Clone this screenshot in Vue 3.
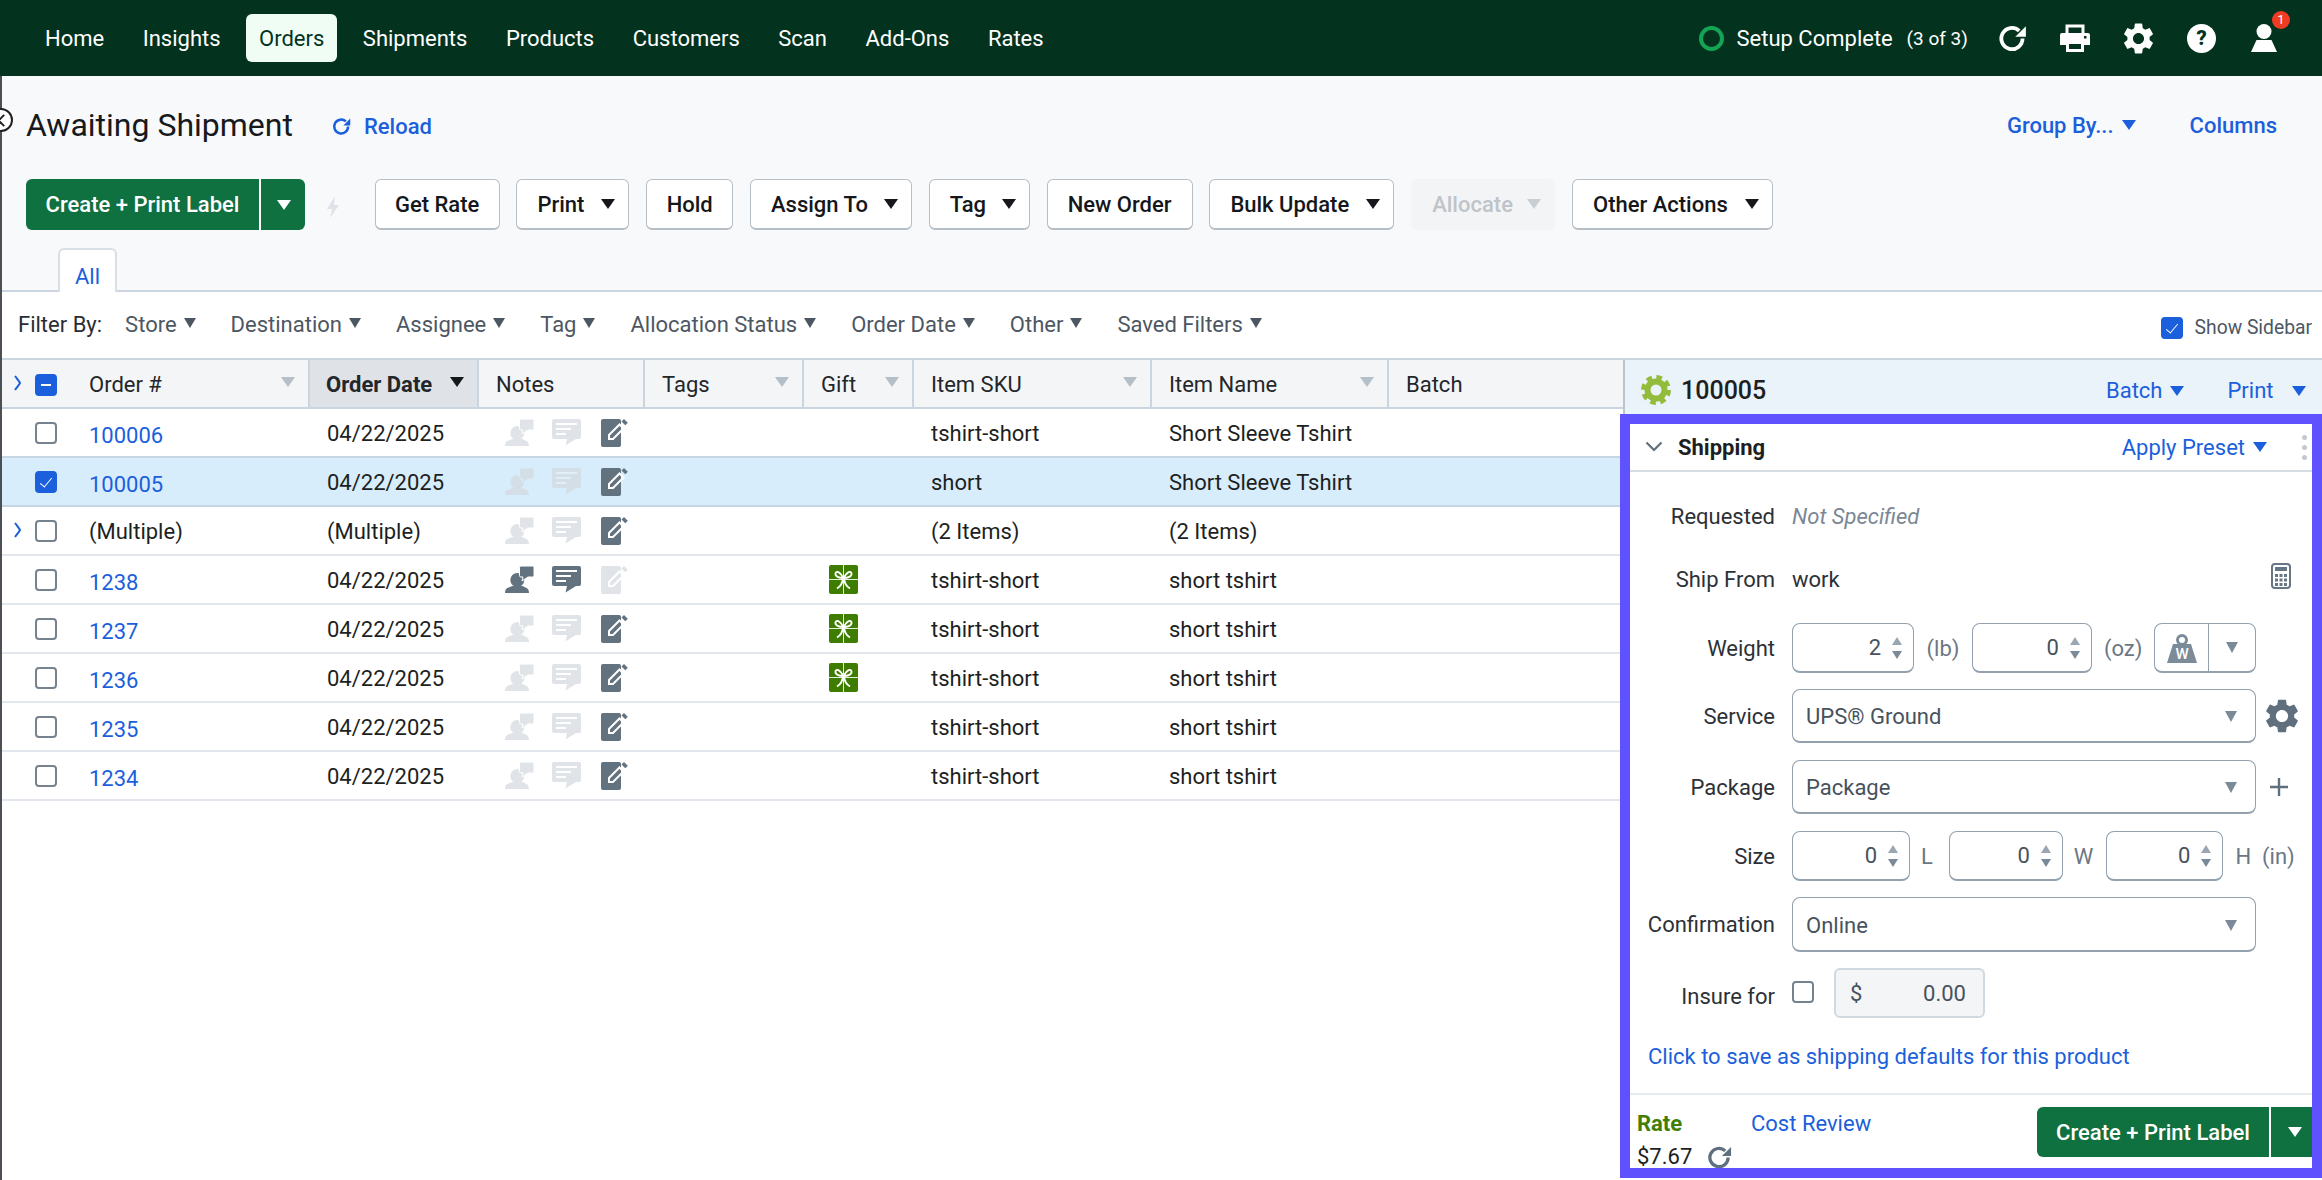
<template>
  <div class="page">
    <header class="nav">
      <div class="nav-links">
        <a v-for="item in navItems" :key="item" class="nav-link" :class="{ active: item === 'Orders' }">{{ item }}</a>
      </div>
      <div class="nav-right">
        <span class="setup-ring"></span>
        <span class="setup-text">Setup Complete</span>
        <span class="setup-count">(3 of 3)</span>
        <svg class="nav-icon refresh-nav" viewBox="0 0 26 26">
          <path d="M22 13a9.5 9.5 0 1 1-3-6.9" fill="none" stroke="#fff" stroke-width="3.4" />
          <path d="M25 2v9.5h-9.5z" fill="#fff" />
        </svg>
        <svg class="nav-icon printer" viewBox="0 0 30 28">
          <path d="M7 9V2h16v7" fill="none" stroke="#fff" stroke-width="3" />
          <path d="M2 9h26a2 2 0 0 1 2 2v10h-6v-4H6v4H0V11a2 2 0 0 1 2-2z" fill="#fff" />
          <path d="M7.5 18.5h15v8h-15z" fill="none" stroke="#fff" stroke-width="3" />
          <rect x="24" y="12" width="2.5" height="2.5" fill="#03331f" />
        </svg>
        <svg class="nav-icon gear" viewBox="2 2 20 20">
          <path fill="#fff" :d="gearPath" />
        </svg>
        <span class="help">?</span>
        <span class="user">
          <svg viewBox="0 0 26 28" class="user-svg">
            <circle cx="13" cy="7.5" r="7.5" fill="#fff" />
            <path d="M5.5 16h15L26 28H0z" fill="#fff" />
          </svg>
          <span class="badge">1</span>
        </span>
      </div>
    </header>

    <div class="content">
      <span class="edge-circle"></span>
      <div class="title-row">
        <h1 class="title">Awaiting Shipment</h1>
        <a class="reload">
          <svg class="reload-icon" viewBox="0 0 26 26">
            <path d="M22 13a9.5 9.5 0 1 1-3-6.9" fill="none" stroke="#1b5fdc" stroke-width="3.4" />
            <path d="M25 2v9.5h-9.5z" fill="#1b5fdc" />
          </svg>
          Reload
        </a>
        <div class="title-links">
          <a class="strong-link">Group By...<i class="caret blue"></i></a>
          <a class="strong-link columns">Columns</a>
        </div>
      </div>

      <div class="actions">
        <div class="split-btn">
          <span class="split-main">Create + Print Label</span>
          <span class="split-arrow"><i class="caret white"></i></span>
        </div>
        <svg class="bolt" viewBox="0 0 14 22"><path d="M9 0 1 13h5l-2 9 9-13H8z" fill="#dfe3e7" /></svg>
        <button v-for="b in actions" :key="b.label" class="btn" :class="{ disabled: b.disabled, plain: !b.caret }" :style="{ width: b.w + 'px' }">
          {{ b.label }}<i v-if="b.caret" class="caret" :class="{ pale: b.disabled }"></i>
        </button>
      </div>

      <div class="tabs"><span class="tab">All</span></div>

      <div class="filters">
        <span class="filter-label">Filter By:</span>
        <span v-for="f in filters" :key="f" class="filter">{{ f }}<i class="caret slate"></i></span>
        <label class="show-sidebar"><span class="check on"></span>Show Sidebar</label>
      </div>

      <div class="main">
        <div class="table">
          <div class="thead grid">
            <div class="th first">
              <svg class="chev" viewBox="0 0 9 18"><path d="M2 2c3 4 4 5 5 7-1 2-2 3-5 7" fill="none" stroke="#1b5fdc" stroke-width="2" /></svg>
              <span class="check on minus"></span>
              <span class="order-head">Order #</span>
              <i class="caret pale-head"></i>
            </div>
            <div class="th sorted">Order Date<i class="caret dark-head"></i></div>
            <div class="th">Notes</div>
            <div class="th">Tags<i class="caret pale-head"></i></div>
            <div class="th">Gift<i class="caret pale-head"></i></div>
            <div class="th">Item SKU<i class="caret pale-head"></i></div>
            <div class="th">Item Name<i class="caret pale-head"></i></div>
            <div class="th last">Batch</div>
          </div>
          <div v-for="row in rows" :key="row.id" class="tr grid" :class="{ selected: row.selected }">
            <div class="td first">
              <svg v-if="row.multi" class="chev" viewBox="0 0 9 18"><path d="M2 2c3 4 4 5 5 7-1 2-2 3-5 7" fill="none" stroke="#1b5fdc" stroke-width="2" /></svg>
              <span v-else class="chev"></span>
              <span class="check" :class="{ on: row.selected }"></span>
              <span v-if="row.multi" class="order-multi">{{ row.id }}</span>
              <a v-else class="order-link">{{ row.id }}</a>
            </div>
            <div class="td">{{ row.date }}</div>
            <div class="td notes">
              <svg class="note-person" :class="row.notes ? 'on' : 'off'" viewBox="0 0 29 27">
                <circle cx="12.300" cy="14" r="7" />
                <path d="M0 27c0-3 1-4.500 3.500-5.500l4-1.500h10l3 1.500c2.500 1 3.500 2.500 3.500 5.500z" />
                <path class="bubble" d="M14.500 1.500a1.500 1.500 0 0 1 1.500-1.500h11.500a1.500 1.500 0 0 1 1.500 1.500v8a1.500 1.500 0 0 1-1.500 1.500h-4.500l-6 4 1-4h-2a1.500 1.500 0 0 1-1.500-1.500z" />
              </svg>
              <svg class="note-msg" :class="row.notes ? 'on' : 'off'" viewBox="0 0 29 27">
                <path d="M2 0h25a2 2 0 0 1 2 2v16a2 2 0 0 1-2 2h-3L13.500 26.500l1.500-6.500H2a2 2 0 0 1-2-2V2a2 2 0 0 1 2-2z" />
                <path class="note-lines" d="M4 5h21M4 10h15M4 15h10" stroke-width="1.800" fill="none" />
              </svg>
              <svg class="note-edit" :class="row.notes ? 'off' : 'on'" viewBox="0 0 27 29">
                <rect x="0" y="1" width="20" height="28" rx="2" />
                <path d="M8 17 18.500 6.500l4 4L12 21H8z" fill="none" stroke="#fff" stroke-width="2" />
                <path d="M20.500 3.500 23 1l3.800 3.800-2.500 2.500z" />
              </svg>
            </div>
            <div class="td"></div>
            <div class="td gift-cell">
              <svg v-if="row.gift" class="gift" viewBox="0 0 29 29">
                <rect width="29" height="29" rx="2" fill="#3f7d00" />
                <path d="M14.500 0v29M0 14.500h29" stroke="#e6eedc" stroke-width="1" />
                <path d="M14.500 13C11 6.500 7 5.500 6.500 8.500S10 13 14.500 13c4.500 0 8.500-1.500 8-4.500S18 6.500 14.500 13z" fill="#3f7d00" stroke="#fff" stroke-width="1.900" />
                <path d="M14 13.500c-.5 5-2.500 8-6 10M15 13.500c.5 5 2.500 8 6 10" fill="none" stroke="#fff" stroke-width="2" />
              </svg>
            </div>
            <div class="td">{{ row.sku }}</div>
            <div class="td">{{ row.name }}</div>
            <div class="td"></div>
          </div>
        </div>

        <aside class="sidebar">
          <div class="side-head">
            <svg class="side-gear" viewBox="0 0 32 32">
              <circle cx="16" cy="16" r="12.500" fill="none" stroke="#93bc3c" stroke-width="5" stroke-dasharray="5.500 4.320" />
              <circle cx="16" cy="16" r="8.500" fill="none" stroke="#93bc3c" stroke-width="6" />
            </svg>
            <span class="side-order">100005</span>
            <a class="side-link batch">Batch<i class="caret blue"></i></a>
            <a class="side-link print">Print<i class="caret blue"></i></a>
          </div>

          <div class="panel">
            <div class="panel-head">
              <svg class="panel-chev" viewBox="0 0 18 11"><path d="M1.500 1.500 9 9l7.500-7.500" fill="none" stroke="#5f6f7e" stroke-width="2.200" /></svg>
              <strong class="panel-title">Shipping</strong>
              <a class="side-link preset">Apply Preset<i class="caret blue"></i></a>
              <span class="kebab"><i></i><i></i><i></i></span>
            </div>

            <div class="form">
              <div class="row info first-info">
                <label>Requested</label>
                <em class="muted">Not Specified</em>
              </div>
              <div class="row info ship-from">
                <label>Ship From</label>
                <span class="value">work</span>
                <svg class="calc" viewBox="0 0 20 26">
                  <rect x="1" y="1" width="18" height="24" rx="3" fill="#fff" stroke="#677684" stroke-width="2" />
                  <rect x="4" y="4" width="12" height="4" fill="#677684" />
                  <path d="M4 11h3v3H4zM8.500 11h3v3h-3zM13 11h3v3h-3zM4 15.500h3v3H4zM8.500 15.500h3v3h-3zM13 15.500h3v3h-3zM4 20h3v3H4zM8.500 20h3v3h-3zM13 20h3v3h-3z" fill="#677684" />
                </svg>
              </div>
              <div class="row weight">
                <label>Weight</label>
                <span class="num w122">2<span class="spin"><i></i><i></i></span></span>
                <span class="unit lb">(lb)</span>
                <span class="num w120">0<span class="spin"><i></i><i></i></span></span>
                <span class="unit oz">(oz)</span>
                <span class="scale-btn">
                  <span class="scale-left">
                    <svg viewBox="0 0 32 30" class="scale-icon">
                      <circle cx="16" cy="7" r="4.500" fill="none" stroke="#7b8b9a" stroke-width="3" />
                      <path d="M7 11h18l6 19H1z" fill="#7b8b9a" />
                      <text x="16" y="26" text-anchor="middle" class="scale-w">W</text>
                    </svg>
                  </span>
                  <span class="scale-right"><i class="select-caret"></i></span>
                </span>
              </div>
              <div class="row select-row">
                <label>Service</label>
                <span class="select">UPS® Ground<i class="select-caret"></i></span>
                <svg class="side-gear-gray" viewBox="2 2 20 20"><path fill="#5f6f7e" :d="gearPath" /></svg>
              </div>
              <div class="row select-row package">
                <label>Package</label>
                <span class="select">Package<i class="select-caret"></i></span>
                <svg class="plus" viewBox="0 0 18 18"><path d="M9 0v18M0 9h18" stroke="#5f6f7e" stroke-width="2.400" /></svg>
              </div>
              <div class="row size">
                <label>Size</label>
                <span class="num w118">0<span class="spin"><i></i><i></i></span></span>
                <span class="unit l">L</span>
                <span class="num w114">0<span class="spin"><i></i><i></i></span></span>
                <span class="unit w">W</span>
                <span class="num w117">0<span class="spin"><i></i><i></i></span></span>
                <span class="unit h">H</span>
                <span class="unit in">(in)</span>
              </div>
              <div class="row select-row confirm">
                <label>Confirmation</label>
                <span class="select">Online<i class="select-caret"></i></span>
              </div>
              <div class="row insure">
                <label>Insure for</label>
                <span class="check insure-check"></span>
                <span class="money"><span>$</span><span>0.00</span></span>
              </div>
              <a class="defaults">Click to save as shipping defaults for this product</a>
            </div>

            <div class="panel-foot">
              <div class="rate-col">
                <div class="rate-top">
                  <b class="rate">Rate</b>
                  <a class="cost">Cost Review</a>
                </div>
                <div class="rate-price">
                  $7.67
                  <svg class="rate-refresh" viewBox="0 0 26 26">
                    <path d="M22 13a9.500 9.500 0 1 1-3-6.900" fill="none" stroke="#5f6f7e" stroke-width="3.400" />
                    <path d="M25 2v9.500h-9.500z" fill="#5f6f7e" />
                  </svg>
                </div>
              </div>
              <div class="split-btn foot-btn">
                <span class="split-main">Create + Print Label</span>
                <span class="split-arrow"><i class="caret white"></i></span>
              </div>
            </div>
          </div>
        </aside>
      </div>
    </div>
  </div>
</template>

<script setup>
const navItems = ['Home', 'Insights', 'Orders', 'Shipments', 'Products', 'Customers', 'Scan', 'Add-Ons', 'Rates']

const gearPath =
  'M19.14 12.94c.04-.3.06-.61.06-.94 0-.32-.02-.64-.07-.94l2.03-1.58a.49.49 0 0 0 .12-.61l-1.92-3.32a.488.488 0 0 0-.59-.22l-2.39.96c-.5-.38-1.03-.7-1.62-.94l-.36-2.54a.484.484 0 0 0-.48-.41h-3.84c-.24 0-.43.17-.47.41l-.36 2.54c-.59.24-1.13.57-1.62.94l-2.39-.96c-.22-.08-.47 0-.59.22L2.74 8.87c-.12.21-.08.47.12.61l2.03 1.58c-.05.3-.09.63-.09.94s.02.64.07.94l-2.03 1.58a.49.49 0 0 0-.12.61l1.92 3.32c.12.22.37.29.59.22l2.39-.96c.5.38 1.03.7 1.62.94l.36 2.54c.05.24.24.41.48.41h3.84c.24 0 .44-.17.47-.41l.36-2.54c.59-.24 1.13-.56 1.62-.94l2.39.96c.22.08.47 0 .59-.22l1.92-3.32c.12-.22.07-.47-.12-.61l-2.01-1.58zM12 15.6c-1.98 0-3.6-1.62-3.6-3.6s1.62-3.6 3.6-3.6 3.6 1.62 3.6 3.6-1.62 3.6-3.6 3.6z'

const actions = [
  { label: 'Get Rate', w: 125 },
  { label: 'Print', w: 113, caret: true },
  { label: 'Hold', w: 87 },
  { label: 'Assign To', w: 162, caret: true },
  { label: 'Tag', w: 101, caret: true },
  { label: 'New Order', w: 146 },
  { label: 'Bulk Update', w: 185, caret: true },
  { label: 'Allocate', w: 144, caret: true, disabled: true },
  { label: 'Other Actions', w: 201, caret: true },
]

const filters = ['Store', 'Destination', 'Assignee', 'Tag', 'Allocation Status', 'Order Date', 'Other', 'Saved Filters']

const rows = [
  { id: '100006', date: '04/22/2025', sku: 'tshirt-short', name: 'Short Sleeve Tshirt' },
  { id: '100005', date: '04/22/2025', sku: 'short', name: 'Short Sleeve Tshirt', selected: true },
  { id: '(Multiple)', date: '(Multiple)', sku: '(2 Items)', name: '(2 Items)', multi: true },
  { id: '1238', date: '04/22/2025', sku: 'tshirt-short', name: 'short tshirt', notes: true, gift: true },
  { id: '1237', date: '04/22/2025', sku: 'tshirt-short', name: 'short tshirt', gift: true },
  { id: '1236', date: '04/22/2025', sku: 'tshirt-short', name: 'short tshirt', gift: true },
  { id: '1235', date: '04/22/2025', sku: 'tshirt-short', name: 'short tshirt' },
  { id: '1234', date: '04/22/2025', sku: 'tshirt-short', name: 'short tshirt' },
]
</script>

<style>
html,
body {
  margin: 0;
  background: #fff;
}
</style>

<style scoped>
.page {
  width: 2322px;
  height: 1180px;
  overflow: hidden;
  display: flex;
  flex-direction: column;
  font-family: Roboto, "Liberation Sans", sans-serif;
  font-size: 22px;
  color: #1d1f22;
}

/* top bar */
.nav {
  height: 76px;
  flex: none;
  background: #03331f;
  display: flex;
  align-items: center;
  justify-content: space-between;
  padding-left: 32px;
  color: #fff;
}
.nav-links {
  display: flex;
  gap: 12.5px;
}
.nav-link {
  height: 48px;
  padding: 0 13px;
  display: flex;
  align-items: center;
  border-radius: 6px;
  color: #fff;
}
.nav-link.active {
  background: #effdf5;
  color: #03331f;
}
.nav-right {
  display: flex;
  align-items: center;
  padding-right: 45px;
}
.setup-ring {
  width: 25px;
  height: 25px;
  box-sizing: border-box;
  border: 4px solid #14a554;
  border-radius: 50%;
  margin-right: 13px;
}
.setup-text {
  width: 170px;
}
.setup-count {
  font-size: 19px;
  width: 91px;
}
.nav-icon {
  flex: none;
}
.refresh-nav {
  width: 29px;
  height: 29px;
  margin-right: 33.500px;
}
.printer {
  width: 30px;
  height: 28px;
  margin-right: 33px;
}
.gear {
  width: 31px;
  height: 31px;
  margin-right: 33px;
}
.help {
  width: 29px;
  height: 29px;
  border-radius: 50%;
  background: #fff;
  color: #03331f;
  font-weight: 900;
  font-size: 20px;
  display: flex;
  align-items: center;
  justify-content: center;
  margin-right: 35px;
}
.user {
  position: relative;
  width: 26px;
  height: 28px;
}
.user-svg {
  display: block;
  width: 26px;
  height: 28px;
}
.badge {
  position: absolute;
  left: 21px;
  top: -13px;
  width: 18px;
  height: 18px;
  border-radius: 50%;
  background: #f03c22;
  color: #fff;
  font-size: 13px;
  line-height: 18px;
  text-align: center;
}

/* page body */
.content {
  flex: 1;
  min-height: 0;
  display: flex;
  flex-direction: column;
  position: relative;
  background: #f8f9fb;
  border-left: 2px solid #4b5056;
}
.edge-circle {
  position: absolute;
  left: -13px;
  top: 32px;
  width: 24px;
  height: 24px;
  box-sizing: border-box;
  border: 2px solid #222;
  border-radius: 50%;
  background: #fff;
}
.edge-circle::after {
  content: "";
  position: absolute;
  right: 3px;
  top: 6px;
  width: 7px;
  height: 7px;
  border: solid #222;
  border-width: 0 0 2px 2px;
  transform: rotate(45deg);
}
.title-row {
  height: 103px;
  box-sizing: border-box;
  display: flex;
  align-items: center;
  padding: 0 45px 5px 24px;
}
.title {
  margin: 0;
  font-size: 32px;
  font-weight: 400;
  color: #17191c;
}
.reload {
  display: flex;
  align-items: center;
  margin-left: 39px;
  color: #1b5fdc;
  font-weight: 500;
  padding-top: 2px;
}
.reload-icon {
  width: 19px;
  height: 19px;
  margin-right: 13px;
}
.title-links {
  margin-left: auto;
  display: flex;
  align-items: center;
}
.strong-link {
  color: #1b5fdc;
  font-weight: 500;
  display: flex;
  align-items: center;
}
.strong-link .caret {
  margin-left: 8px;
}
.columns {
  margin-left: 54px;
}

.caret {
  display: inline-block;
  flex: none;
  width: 0;
  height: 0;
  border-left: 7px solid transparent;
  border-right: 7px solid transparent;
  border-top: 10px solid #15171a;
}
.caret.white {
  border-top-color: #fff;
}
.caret.blue {
  border-top-color: #1b5fdc;
}
.caret.slate {
  border-left-width: 6px;
  border-right-width: 6px;
  border-top-color: #4d5763;
  margin-left: 7px;
  margin-bottom: 3px;
}
.caret.pale {
  border-top-color: #c9ced3;
}

/* toolbar */
.actions {
  display: flex;
  align-items: center;
  gap: 16.800px;
  height: 51px;
  padding-left: 24px;
}
.split-btn {
  display: flex;
  height: 51px;
  width: 279px;
  flex: none;
  box-sizing: border-box;
  background: #0f7040;
  border-radius: 6px;
  color: #fff;
  font-weight: 500;
  overflow: hidden;
}
.split-main {
  flex: 1;
  display: flex;
  align-items: center;
  justify-content: center;
  border-right: 2px solid #fff;
}
.split-arrow {
  width: 44px;
  display: flex;
  align-items: center;
  justify-content: center;
  padding-left: 2px;
  box-sizing: border-box;
}
.bolt {
  width: 14px;
  height: 22px;
  margin: 4px 18px 0 4px;
}
.btn {
  height: 51px;
  box-sizing: border-box;
  background: #fff;
  border: 1.500px solid #b6bec6;
  border-bottom-width: 2px;
  border-radius: 6px;
  font: inherit;
  font-weight: 500;
  color: #15171a;
  display: flex;
  align-items: center;
  justify-content: space-between;
  padding: 0 13px 0 20px;
  white-space: nowrap;
}
.btn.plain {
  justify-content: center;
  padding: 0;
}
.btn.disabled {
  background: #f3f4f6;
  border-color: #f3f4f6;
  color: #bfc4c9;
}

/* tabs + filters */
.tabs {
  height: 62px;
  display: flex;
  align-items: flex-end;
  padding-left: 56px;
  border-bottom: 2px solid #cbd5df;
  box-sizing: border-box;
}
.tab {
  width: 59px;
  height: 44px;
  box-sizing: border-box;
  background: #fff;
  border: 2px solid #d8dfe6;
  border-bottom: none;
  border-radius: 6px 6px 0 0;
  color: #1b5fdc;
  display: flex;
  align-items: center;
  justify-content: center;
  padding-top: 10px;
  margin-bottom: -2px;
}
.filters {
  height: 68px;
  flex: none;
  box-sizing: border-box;
  background: #fff;
  border-bottom: 2px solid #cbd5df;
  display: flex;
  align-items: center;
  padding: 0 10px 1px 16px;
  color: #4d5763;
}
.filter-label {
  color: #2a2e33;
  margin-right: 23px;
}
.filter {
  margin-right: 35px;
  display: inline-flex;
  align-items: center;
}
.show-sidebar {
  margin-left: auto;
  display: flex;
  align-items: center;
  font-size: 19.300px;
  margin-top: 6px;
}
.show-sidebar .check {
  margin-right: 12px;
}

/* checkbox */
.check {
  flex: none;
  display: inline-block;
  width: 22px;
  height: 22px;
  box-sizing: border-box;
  border: 2px solid #76838f;
  border-radius: 4px;
  background: #fff;
  position: relative;
}
.check.on {
  background: #1b5fdc;
  border-color: #1b5fdc;
}
.check.on::after {
  content: "";
  position: absolute;
  left: 6px;
  top: 2px;
  width: 5px;
  height: 11px;
  border: solid #fff;
  border-width: 0 1.500px 1.500px 0;
  transform: rotate(40deg);
}
.check.minus::after {
  left: 4px;
  top: 8px;
  width: 10px;
  height: 0;
  border-width: 0 0 2px 0;
  transform: none;
}

/* table */
.main {
  flex: 1;
  min-height: 0;
  display: flex;
  background: #fff;
}
.table {
  width: 1621px;
  flex: none;
}
.grid {
  display: grid;
  grid-template-columns: 308px 169px 166px 159px 110px 238px 237px 234px;
}
.thead {
  height: 49px;
  background: #f3f5f7;
  border-bottom: 2px solid #cbd5df;
  box-sizing: border-box;
}
.th {
  display: flex;
  align-items: center;
  justify-content: space-between;
  padding: 2px 13px 0 17px;
  border-right: 2px solid #cbd5df;
  color: #23262a;
}
.th .caret {
  margin-bottom: 5px;
}
.caret.pale-head {
  border-top-color: #b5bfc8;
}
.th.last {
  border-right: none;
}
.th.sorted {
  background: #dfe3e7;
  font-weight: 700;
  padding-left: 16px;
}
.th.first {
  padding-left: 11px;
  justify-content: flex-start;
}
.order-head {
  margin-left: 32px;
  flex: 1;
}
.chev {
  flex: none;
  width: 9px;
  height: 18px;
  margin-right: 13px;
  margin-bottom: 3px;
}
.tr {
  height: 49px;
  box-sizing: border-box;
  border-bottom: 2px solid #e1e7ec;
  color: #1d1f22;
}
.tr.selected {
  background: #d8edfb;
  border-bottom-color: #c6d5e2;
}
.tr:has(+ .selected) {
  border-bottom-color: #c6d5e2;
}
.td {
  display: flex;
  align-items: center;
  padding-left: 17px;
  min-width: 0;
  padding-top: 1px;
}
.td.first {
  padding-left: 11px;
}
.order-link {
  margin-left: 32px;
  color: #1b5fdc;
  padding-top: 4px;
}
.order-multi {
  margin-left: 32px;
}
.notes {
  padding-left: 26px;
  padding-top: 0;
}
.notes svg {
  flex: none;
  display: block;
}
.note-person {
  width: 29px;
  height: 27px;
  fill: #e0e4e8;
}
.note-msg {
  width: 29px;
  height: 27px;
  margin-left: 18px;
  fill: #e0e4e8;
}
.note-lines {
  stroke: #fff;
}
.note-edit {
  width: 27px;
  height: 29px;
  margin-left: 20px;
}
.bubble {
  stroke: #fff;
  stroke-width: 1;
}
.note-person.on,
.note-msg.on,
.note-edit.on {
  fill: #63727f;
}
.note-edit.off {
  fill: #e0e4e8;
}
.selected .off {
  fill: #d4dee6;
}
.selected .bubble {
  stroke: #d8edfb;
}
.selected .note-lines {
  stroke: #e0eef8;
}
.gift-cell {
  padding-left: 25px;
  padding-top: 1px;
  padding-bottom: 2px;
}
.gift {
  width: 29px;
  height: 29px;
  display: block;
}

/* sidebar */
.sidebar {
  width: 699px;
  flex: none;
  display: flex;
  flex-direction: column;
  min-height: 0;
}
.side-head {
  height: 54px;
  flex: none;
  box-sizing: border-box;
  background: #eaf2fa;
  border-left: 2px solid #b9c4ce;
  display: flex;
  align-items: center;
  padding-left: 15px;
  padding-top: 7px;
}
.side-gear {
  width: 32px;
  height: 32px;
  margin-bottom: 2px;
}
.side-order {
  margin-left: 9px;
  font-size: 25px;
  font-weight: 500;
}
.side-link {
  color: #1b5fdc;
  display: flex;
  align-items: center;
}
.side-link .caret {
  margin-left: 8px;
}
.batch {
  margin-left: auto;
}
.print {
  margin-left: 43px;
  margin-right: 16.500px;
}
.print .caret {
  margin-left: 18px;
}
.panel {
  height: 764px;
  box-sizing: border-box;
  margin-left: -3px;
  border: 10px solid #6051ff;
  background: #fff;
  display: flex;
  flex-direction: column;
  overflow: hidden;
}
.panel-head {
  height: 48px;
  flex: none;
  box-sizing: border-box;
  border-bottom: 2px solid #d6dde3;
  display: flex;
  align-items: center;
  padding-left: 15px;
}
.panel-chev {
  width: 18px;
  height: 11px;
  margin-bottom: 2px;
}
.panel-title {
  margin-left: 15px;
  font-weight: 700;
}
.preset {
  margin-left: auto;
}
.kebab {
  display: flex;
  flex-direction: column;
  gap: 5px;
  margin-left: 35px;
  margin-right: 5px;
}
.kebab i {
  width: 5px;
  height: 5px;
  border-radius: 50%;
  background: #c2c9d0;
}

/* form */
.form {
  flex: 1;
  display: flex;
  flex-direction: column;
  padding: 29px 0 0 14px;
  color: #2d3136;
}
.row {
  display: flex;
  align-items: center;
  flex: none;
}
.row label {
  width: 131px;
  margin-right: 17px;
  text-align: right;
  flex: none;
}
.info {
  height: 30px;
}
.muted {
  color: #7b8794;
}
.value {
  color: #2d3136;
}
.ship-from {
  margin-top: 33px;
}
.calc {
  width: 20px;
  height: 26px;
  margin-left: auto;
  margin-right: 21px;
  margin-bottom: 6px;
}
.weight {
  margin-top: 29px;
  height: 50px;
}
.num,
.select,
.scale-btn {
  box-sizing: border-box;
  background: #fff;
  border: 1.500px solid #93a0ad;
  border-bottom-width: 2px;
  border-radius: 8px;
  color: #47525d;
}
.num {
  height: 50px;
  flex: none;
  display: flex;
  align-items: center;
  justify-content: flex-end;
  padding-right: 11px;
}
.w122 { width: 122px; }
.w120 { width: 120px; }
.w118 { width: 118px; }
.w114 { width: 114px; }
.w117 { width: 117px; }
.spin {
  display: flex;
  flex-direction: column;
  gap: 6px;
  margin-left: 11px;
}
.spin i {
  width: 0;
  height: 0;
  border-left: 5px solid transparent;
  border-right: 5px solid transparent;
  border-bottom: 8px solid #9aa6b1;
}
.spin i:last-child {
  border-bottom: none;
  border-top: 8px solid #7b8a98;
}
.unit {
  flex: none;
  color: #6b7784;
}
.lb {
  margin: 0 12.500px;
}
.oz {
  margin: 0 12px;
}
.scale-btn {
  width: 102px;
  height: 50px;
  display: flex;
}
.scale-left {
  width: 53px;
  border-right: 1.500px solid #93a0ad;
  display: flex;
  align-items: center;
  justify-content: center;
}
.scale-icon {
  width: 32px;
  height: 30px;
}
.scale-w {
  font-size: 15px;
  fill: #fff;
  font-weight: 500;
}
.scale-right {
  flex: 1;
  display: flex;
  align-items: center;
  justify-content: center;
}
.select-caret {
  display: block;
  flex: none;
  width: 0;
  height: 0;
  border-left: 6.500px solid transparent;
  border-right: 6.500px solid transparent;
  border-top: 11px solid #7b8a98;
}
.select-row {
  margin-top: 16px;
  height: 54px;
}
.package {
  margin-top: 17px;
}
.confirm {
  height: 55px;
}
.select {
  width: 464px;
  height: 100%;
  flex: none;
  display: flex;
  align-items: center;
  justify-content: space-between;
  padding: 2px 18px 0 13px;
}
.side-gear-gray {
  width: 34px;
  height: 34px;
  margin-left: 9px;
}
.plus {
  width: 18px;
  height: 18px;
  margin-left: 14px;
}
.size {
  margin-top: 17px;
  height: 50px;
}
.l {
  margin: 0 16px 0 11px;
}
.w {
  margin: 0 13px 0 11px;
}
.h {
  margin-left: 12px;
}
.in {
  margin-left: 11px;
}
.insure {
  margin-top: 16px;
  height: 50px;
}
.insure-check {
  margin-top: -3px;
}
.money {
  width: 151px;
  height: 50px;
  margin-left: 20px;
  box-sizing: border-box;
  background: #f3f5f7;
  border: 2px solid #d0d8e0;
  border-radius: 6px;
  color: #47525d;
  display: flex;
  align-items: center;
  justify-content: space-between;
  padding: 0 17px 0 14px;
}
.insure label {
  padding-top: 6px;
}
.defaults {
  margin-top: 26px;
  margin-left: 4px;
  color: #1b5fdc;
}

/* panel footer */
.panel-foot {
  height: 75px;
  flex: none;
  box-sizing: border-box;
  border-top: 2px solid #e6ebef;
  display: flex;
  justify-content: space-between;
  padding: 13px 0 0 7px;
}
.rate-top {
  display: flex;
  align-items: center;
  line-height: 32px;
}
.rate {
  width: 114px;
  color: #3f7f08;
  font-weight: 700;
}
.cost {
  color: #1b5fdc;
}
.rate-price {
  display: flex;
  align-items: center;
  line-height: 32px;
  margin-top: 1px;
}
.rate-refresh {
  width: 25px;
  height: 25px;
  margin-left: 15px;
}
.foot-btn {
  width: 275px;
  height: 50px;
  border-radius: 6px 0 0 6px;
  margin-top: -1px;
}
.foot-btn .split-arrow {
  width: 41px;
  padding-left: 6px;
}
</style>
